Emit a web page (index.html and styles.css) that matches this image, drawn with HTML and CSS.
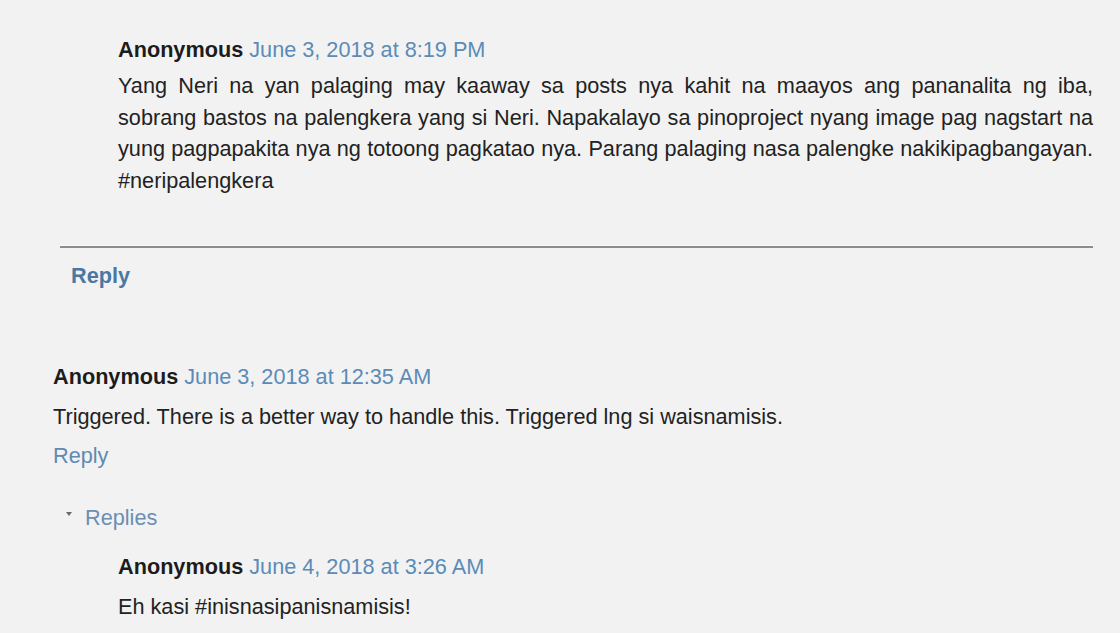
FILE: index.html
```html
<!DOCTYPE html>
<html>
<head>
<meta charset="utf-8">
<link rel="stylesheet" href="styles.css">
</head>
<body>
<div class="comments">
  <div class="thread">
    <div class="replies-list">
      <div class="comment first">
        <div class="comment-header"><span class="user">Anonymous</span> <a class="date" href="#">June 3, 2018 at 8:19 PM</a></div>
        <p class="comment-body justified">Yang Neri na yan palaging may kaaway sa posts nya kahit na maayos ang pananalita ng iba, sobrang bastos na palengkera yang si Neri. Napakalayo sa pinoproject nyang image pag nagstart na yung pagpapakita nya ng totoong pagkatao nya. Parang palaging nasa palengke nakikipagbangayan. #neripalengkera</p>
      </div>
    </div>
    <div class="continue"><a class="continue-link" href="#">Reply</a></div>
  </div>

  <div class="comment top-level">
    <div class="comment-header"><span class="user">Anonymous</span> <a class="date" href="#">June 3, 2018 at 12:35 AM</a></div>
    <p class="comment-body">Triggered. There is a better way to handle this. Triggered lng si waisnamisis.</p>
    <a class="reply-link" href="#">Reply</a>
  </div>

  <div class="replies-toggle"><span class="caret"></span><a class="toggle-link" href="#">Replies</a></div>

  <div class="nested">
    <div class="comment">
      <div class="comment-header"><span class="user">Anonymous</span> <a class="date" href="#">June 4, 2018 at 3:26 AM</a></div>
      <p class="comment-body">Eh kasi #inisnasipanisnamisis!</p>
    </div>
  </div>
</div>
</body>
</html>
```

FILE: styles.css
```css
html, body {
  margin: 0;
  padding: 0;
  background: #f2f2f2;
}
body {
  font-family: "Liberation Sans", Arial, sans-serif;
  font-size: 21.68px;
  color: #222;
  overflow: hidden;
}
a {
  text-decoration: none;
}
.comments {
  padding: 35px 27px 0 53px;
}
.thread {
  margin-left: 7px;
}
.replies-list {
  padding-left: 58px;
}
.comment-header {
  line-height: 30px;
  height: 30px;
}
.user {
  font-weight: bold;
  color: #1c1c1c;
}
.date {
  color: #5b8bb6;
}
.comment-body {
  margin: 0;
  line-height: 31.5px;
}
.first .comment-body {
  margin-top: 5px;
}
.justified {
  text-align: justify;
}
.continue {
  margin-top: 50px;
  border-top: 2px solid #8c8c8c;
  box-shadow: 0 -1px 0 #fbfbfb;
  padding: 13px 0 0 11px;
  line-height: 30px;
}
.continue-link {
  font-weight: bold;
  color: #4a78a2;
}
.top-level {
  margin-top: 71px;
}
.top-level .comment-body,
.nested .comment-body {
  margin-top: 9px;
}
.reply-link {
  display: block;
  margin-top: 8px;
  line-height: 30px;
  color: #5f8ab2;
}
.replies-toggle {
  margin-top: 32px;
  line-height: 30px;
  padding-left: 13px;
  display: flex;
  align-items: center;
}
.caret {
  width: 0;
  height: 0;
  border-left: 3.5px solid transparent;
  border-right: 3.5px solid transparent;
  border-top: 4px solid #6a6a6a;
  margin: 0 13px 8px 0;
}
.toggle-link {
  color: #6a8fb3;
}
.nested {
  margin-top: 19px;
  padding-left: 65px;
}
```
